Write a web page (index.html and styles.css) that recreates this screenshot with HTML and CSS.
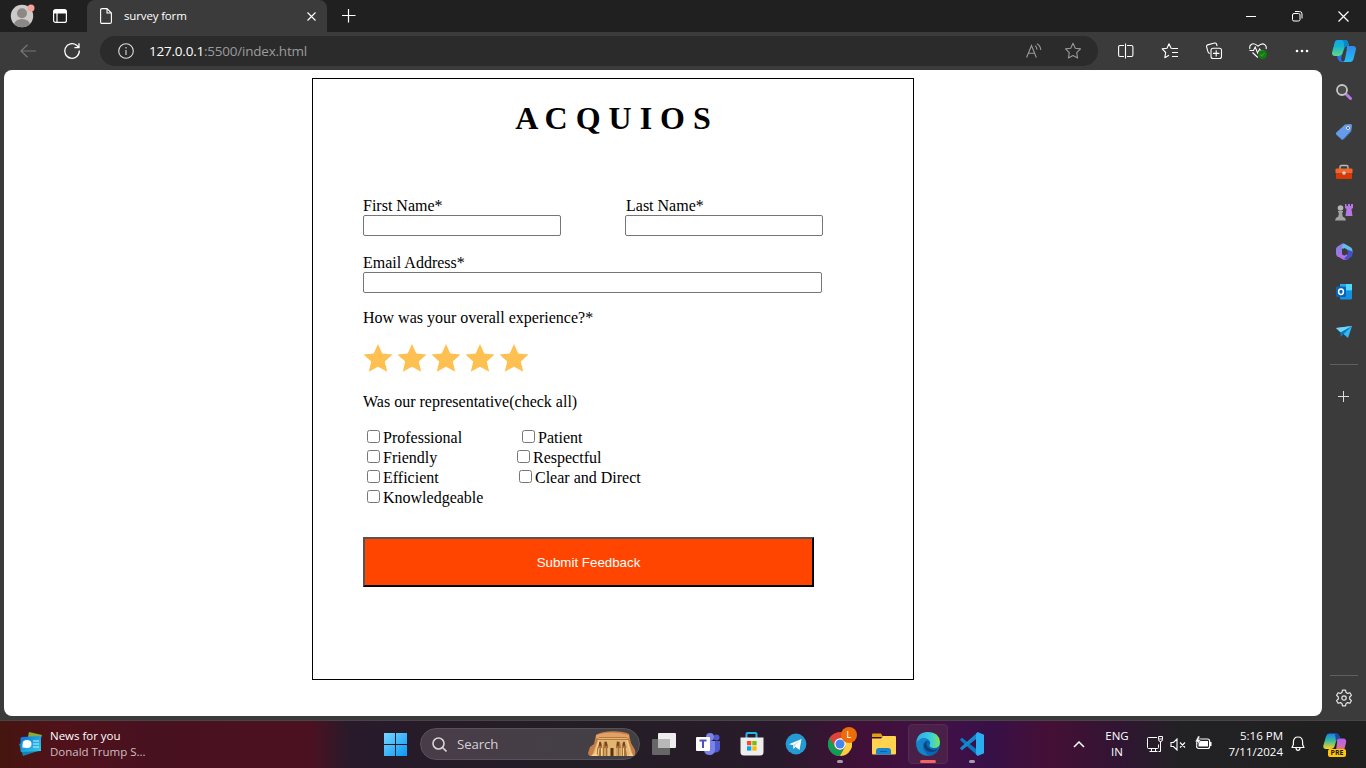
FILE: index.html
```html
<!DOCTYPE html>
<html lang="en">
<head>
<meta charset="utf-8">
<title>survey form</title>
<link rel="stylesheet" href="styles.css">
</head>
<body>
<header class="titlebar">
  <div class="avatar"><svg width="26" height="26" viewBox="0 0 26 26"><defs><clipPath id="av"><circle cx="13" cy="14" r="11.2"/></clipPath></defs><circle cx="13" cy="14" r="11.2" fill="#cdcac7"/><g clip-path="url(#av)" fill="#8b8885"><circle cx="13" cy="11.3" r="5"/><ellipse cx="13" cy="22.5" rx="7.8" ry="5.5"/></g><circle cx="22" cy="6" r="3.5" fill="#f8a09a"/></svg></div>
  <div class="tabmenu"><svg width="14" height="14" viewBox="0 0 14 14"><rect x=".6" y=".6" width="12.8" height="12.8" rx="2" fill="none" stroke="#fff" stroke-width="1.2"/><path d="M1 1h12v3.5H1z" fill="#fff"/><path d="M4 4v9" stroke="#fff" stroke-width="1.2"/></svg></div>
  <div class="tab">
    <svg class="doc" width="12" height="16" viewBox="0 0 12 16" fill="none" stroke="#fff" stroke-width="1.1"><path d="M2 .6h5L11.4 5v9q0 1.400-1.400 1.400H2Q.6 15.400.6 14V2Q.6.6 2 .6zM7 .8V5h4.200"/></svg>
    <span class="tabname">survey form</span>
    <svg width="9" height="9" viewBox="0 0 9 9" stroke="#fff" stroke-width="1.1"><path d="M.5.5l8 8M8.500.5l-8 8"/></svg>
  </div>
  <div class="newtab"><svg width="14" height="14" viewBox="0 0 14 14" stroke="#fff" stroke-width="1.2"><path d="M7 0v14M0 7h14" transform="translate(-.5 -.5)"/></svg></div>
  <div class="winbtns">
    <span><svg width="10" height="10" stroke="#fff"><path d="M0 5.500h10"/></svg></span>
    <span><svg width="11" height="11" fill="none" stroke="#fff"><rect x=".5" y="2.500" width="7.500" height="7.500" rx="1.500"/><path d="M3 .5h4.500q2.500 0 2.500 2.500V7.500"/></svg></span>
    <span><svg width="11" height="11" stroke="#fff" stroke-width="1.2"><path d="M.5.5l10 10M10.500.5l-10 10"/></svg></span>
  </div>
</header>
<nav class="toolbar">
  <span class="nav back"><svg width="16" height="14" fill="none" stroke="#777" stroke-width="1.2"><path d="M16 7H1M7.500.8L1 7l6.500 6.200"/></svg></span>
  <span class="nav"><svg width="18" height="18" viewBox="0 0 18 18" fill="none" stroke="#fff" stroke-width="1.3"><path d="M16.300 8.500A7.300 7.300 0 1 1 13.600 3.300L16 5.500M16 1.200v4.500h-4.600"/></svg></span>
  <div class="address">
    <svg width="16" height="16" viewBox="0 0 16 16" fill="none" stroke="#ddd" stroke-width="1.1"><circle cx="8" cy="8" r="7.300"/><path d="M8 7v5M8 4v1.400"/></svg>
    <span class="url"><b>127.0.0.1</b>:5500/index.html</span>
    <svg class="aloud" width="16" height="16" viewBox="0 0 16 16" fill="none" stroke="#999" stroke-width="1.100"><path d="M.6 14.500L5.500 2.500 10.300 14.500M2.300 10.300h6.400M9 2.600q1.800 1.200 2 4M11 .8q3.300 1.800 3.800 6.200"/></svg>
    <svg width="18" height="18" viewBox="0 0 18 18" fill="none" stroke="#999" stroke-width="1.1" stroke-linejoin="round"><path d="M9 1.300l2.300 4.900 5.200.7-3.800 3.700.9 5.400L9 13.400 4.400 16l.9-5.400L1.500 6.900l5.200-.7z"/></svg>
  </div>
  <div class="tools">
    <span><svg width="16" height="16" viewBox="0 0 16 16" fill="none" stroke="#fff" stroke-width="1.100"><path d="M6 2.500H2Q.6 2.500.6 4v8q0 1.500 1.400 1.500h4M9 2.500h4.500q1.400 0 1.400 1.500v8q0 1.500-1.400 1.500H9M7.500.5v15"/></svg></span>
    <span><svg width="18" height="18" viewBox="0 0 18 18" fill="none" stroke="#fff" stroke-width="1.100" stroke-linejoin="round"><path d="M12 6.500l-1.900-.3L8 1.700 6 6.200l-4.800.7 3.500 3.600-.9 5.200L8 13.200M10.500 6.500H17M11 10.500h6M11 14.500h6"/></svg></span>
    <span><svg width="18" height="18" viewBox="0 0 18 18" fill="none" stroke="#fff" stroke-width="1.100"><rect x="6" y="6.200" width="10.500" height="10.300" rx="2"/><path d="M11.200 8.200v6.400M8 11.400h6.400M4.800 11.500Q3.300 11 3 9.800L1.600 4.800q-.3-1.500 1-1.900l7-1.900q1.400-.3 1.900 1l.6 2"/></svg></span>
    <span><svg width="20" height="18" viewBox="0 0 20 18" fill="none" stroke="#fff" stroke-width="1.100"><path d="M2 7Q1 4.300 3.200 2.500q3-2 6.800 1.700 4-3.700 6.700-1.600Q19 4.400 18 7M1.500 8.500h4L7.200 5l2.400 6 2-4 1 1.500h3M4.500 10.500l5.300 5"/><circle cx="14.500" cy="12.500" r="4.500" fill="#107c10" stroke="none"/><path d="M12.400 12.500l1.500 1.500 2.700-3" stroke="#3f983f"/></svg></span>
    <span><svg width="14" height="4" fill="#fff"><circle cx="2" cy="2" r="1.300"/><circle cx="7" cy="2" r="1.300"/><circle cx="12" cy="2" r="1.300"/></svg></span>
    <span class="copilot"><svg width="24" height="22" viewBox="0 0 24 22"><defs><linearGradient id="ca" x2="0" y2="1"><stop stop-color="#10a6ed"/><stop offset=".4" stop-color="#16b5cf"/><stop offset="1" stop-color="#65d985"/></linearGradient><linearGradient id="cb" x2="0" y2="1"><stop stop-color="#3488eb"/><stop offset="1" stop-color="#20c0f5"/></linearGradient></defs><path d="M5 0h8q3 0 3.500 4l.5 2h-2q-2 0-3 3l-1.500 4.500Q9.500 16 7 16H3Q-1 16 .3 11.500L2.500 3Q3.300 0 5 0z" fill="url(#ca)"/><path d="M5 16h2q2.500 0 3.500-2.500L9 19q.8 3 3.500 3H10q-4 0-5-6z" fill="#2870e8"/><path d="M15 6h6q4 0 2.700 4.500L21.500 19q-.8 3-3.500 3h-8q2.500 0 3-3l1.500-8q.7-5 .5-5z" fill="url(#cb)"/><path d="M10 0h3q3.200 0 4 6h-2q-2 0-3 3 .8-8-2-9z" fill="#0786cc"/></svg></span>
  </div>
</nav>
<div class="middle">
  <main class="page">
    <form class="survey">
      <h1>A C Q U I O S</h1>
      <div class="fields">
        <div class="names">
          <label>First Name*<input type="text"></label>
          <label class="last"><span>Last Name*</span><input type="text"></label>
        </div>
        <label class="email">Email Address*<input type="text"></label>
        <p class="question">How was your overall experience?*</p>
        <div class="stars">
          <svg viewBox="0 0 30 30"><path id="star" d="M15 1l4.300 9.500 10.200 1-7.700 6.900 2.400 10.300L15 23.700l-9.200 5 2.400-10.300L.5 11.500l10.200-1z"/></svg><svg viewBox="0 0 30 30"><use href="#star"/></svg><svg viewBox="0 0 30 30"><use href="#star"/></svg><svg viewBox="0 0 30 30"><use href="#star"/></svg><svg viewBox="0 0 30 30"><use href="#star"/></svg>
        </div>
        <p class="question">Was our representative(check all)</p>
        <div class="checks">
          <div><label class="opt professional"><input type="checkbox">Professional</label><label class="opt"><input type="checkbox">Patient</label></div>
          <div><label class="opt friendly"><input type="checkbox">Friendly</label><label class="opt"><input type="checkbox">Respectful</label></div>
          <div><label class="opt efficient"><input type="checkbox">Efficient</label><label class="opt"><input type="checkbox">Clear and Direct</label></div>
          <div><label class="opt"><input type="checkbox">Knowledgeable</label></div>
        </div>
        <button class="submit" type="button">Submit Feedback</button>
      </div>
    </form>
  </main>
  <aside class="sidebar">
    <span><svg width="18" height="18"><path d="M11.500 11.500l4 4" stroke="#b47be8" stroke-width="3" stroke-linecap="round"/><circle cx="7" cy="7" r="5" fill="#4a4a4a" stroke="#c5c5c5" stroke-width="1.800"/></svg></span>
    <span><svg width="18" height="18"><path d="M10 1.500l5.500-.5q1.500 0 1.500 1.500l-.8 5.500-7.700 8q-1 1-2 0L1.300 11.500q-1-1 0-2z" fill="#659bea"/><path d="M1.300 11.500L6.500 16q1 1 2 0l7.700-8" fill="none" stroke="#4f83d8"/><circle cx="13" cy="5" r="1.500" fill="#345" stroke="#e8f2ff"/></svg></span>
    <span><svg width="18" height="16"><path d="M5 5V3q0-1.500 1.500-1.500h5Q13 1.500 13 3v2" fill="none" stroke="#bbb" stroke-width="1.400"/><rect x=".5" y="4.500" width="17" height="5" rx="1" fill="#f5652c"/><path d="M1 9.500h16V14q0 1-1 1H2q-1 0-1-1z" fill="#d83b01"/><circle cx="9" cy="9" r="1.800" fill="#d1d1d1"/></svg></span>
    <span><svg width="18" height="18"><path d="M10 1h1.500v2H13V1h2v2h1V1h2v4l-1.500 1 1 7h-7l1-7L10 5z" fill="#b678e3"/><circle cx="5.500" cy="5" r="2.800" fill="#b5b5b5"/><path d="M3 8h5v1.500H7l.7 4q3 1 3.300 4H0q.3-3 3.300-4l.7-4H3z" fill="#a2a2a2"/></svg></span>
    <span><svg width="18" height="18"><path d="M6 1.500Q8 0 10 1l6 3.500Q17.500 5.500 17.500 8v2L12.500 8 6 5z" fill="#61bdf0"/><path d="M9 .7Q7 2 7 4v7l-4 3q-2-1-2-4V6q0-1.500 1.500-2.500l4-2.500Q8 .3 9 .7z" fill="#8f7de0"/><path d="M1 9.500q0 3 2 4l5 3q2 1 4 0l3-2-3.500-3.500-2.500 1.500L5.500 10 2 13z" fill="#b56fe8"/><path d="M12.500 6.500l5 2V11q0 2-2 3.500l-3.500 2q-2 .5-3-.5l3.500-4z" fill="#4451c8"/><path d="M7 6.500l2.500-1.400 3 1.700v3.900l-3 1.800L7 11z" fill="#3b3b3b"/></svg></span>
    <span><svg width="18" height="18"><rect x="5" y="1" width="12" height="12" fill="#28a8ea"/><path d="M11 1h6v6h-6z" fill="#50d9ff"/><path d="M5 8l12 0v7q0 1.500-1.500 1.500H6q-1 0-1-1z" fill="#1490df"/><rect x="1" y="3.500" width="10" height="10.500" rx="1" fill="#0864b9"/><ellipse cx="6" cy="8.700" rx="2.400" ry="2.700" fill="none" stroke="#fff" stroke-width="1.500"/></svg></span>
    <span><svg width="18" height="14"><path d="M1 3l16-2-4 12-4.500-4z" fill="#34b7ef"/><path d="M17 1L5.500 7.500 1 3z" fill="#72d4fa"/><path d="M17 1L5.500 7.500V12l3-3z" fill="#0879c4"/></svg></span>
    <i class="line"></i>
    <span class="add"><svg width="11" height="11" stroke="#ddd"><path d="M5.500 0v11M0 5.500h11"/></svg></span>
    <i class="line bottom"></i>
    <span class="gear"><svg width="18" height="18" viewBox="0 0 18 18" fill="none" stroke="#e5e5e5" stroke-width="1.200" stroke-linejoin="round"><path d="M7.500 1.200h3l.6 2.300 1.500.9 2.300-.7 1.500 2.600-1.700 1.700v2l1.700 1.700-1.500 2.600-2.300-.7-1.500.9-.6 2.300h-3l-.6-2.300-1.500-.9-2.300.7-1.500-2.600L3.300 10V8L1.600 6.300l1.500-2.600 2.300.7 1.500-.9z"/><circle cx="9" cy="9" r="2.200"/></svg></span>
  </aside>
</div>
<footer class="taskbar">
  <div class="widgets"><svg width="24" height="24" viewBox="0 0 24 24"><path d="M10 0l13 3-3 10-12-3z" fill="#87ac3a"/><path d="M0 12l14-5 5 12-15 5z" fill="#1580b1"/><defs><linearGradient id="ng" x2="1" y2="1"><stop stop-color="#0872dc"/><stop offset="1" stop-color="#35d0e8"/></linearGradient></defs><path d="M3 5l19-1v15L3 20q-1.500 0-1.500-1.500v-12Q1.500 5 3 5z" fill="url(#ng)"/><path d="M3.500 15.500V12q0-4 4.500-4t4.500 4-4.500 4z" fill="#fff"/><path d="M14 9h6M14 12h6M14 15h6" stroke="#bff4ff" stroke-width="1.200"/></svg>
    <div class="news"><div>News for you</div><div class="sub">Donald Trump S...</div></div></div>
  <div class="apps">
    <span class="start"><svg width="23" height="23"><defs><linearGradient id="wg" gradientUnits="userSpaceOnUse" x1="0" y1="0" x2="23" y2="23"><stop stop-color="#75d7ff"/><stop offset="1" stop-color="#0a97f5"/></linearGradient></defs><path d="M0 0h11v11H0zM12 0h11v11H12zM0 12h11v11H0zM12 12h11v11H12z" fill="url(#wg)"/></svg></span>
    <div class="search"><svg width="15" height="15" fill="none" stroke="#d7d5d7" stroke-width="1.600"><circle cx="6.500" cy="6.500" r="5.500"/><path d="M10.500 10.500l4 4"/></svg><span>Search</span>
      <svg class="temple" width="48" height="26" viewBox="0 0 48 26"><path d="M0 22l2-6 4-3L8 4q4-3 12-3.500Q34-.5 41 3l2 9 4 7q1 4-1 6H2q-2-1-2-3z" fill="#c57e47"/><path d="M8 4q14-5 33 0v3H8z" fill="#e2a166"/><path d="M4 25L11 6h28l6 19z" fill="#e3b570"/><path d="M11 6.500h28M10 8.500h30" stroke="#b27a3c"/><path d="M11 9l-4 16M39 9l4 16" stroke="#f5d893"/><path d="M9 25v-7l2-5 1-3 2 3v12zM15 25v-8l1-6 2-1 2 4v11zM28 25V14l1-4 3 1 1 6v8zM34 25V13l2-3 2 5 2 10z" fill="#a8713b"/><path d="M12 11v4M18 11v4M30 11v4M36 11v4" stroke="#60371c" stroke-width="1.500"/><path d="M11 17l-1 8M13.500 17v8M17 17v8M20 17v8M29 17v8M32 17v8M35.500 17v8M38.500 17l1 8" stroke="#f6d28a"/><path d="M22.500 25v-8h3v8z" fill="#573315"/><path d="M3 25q5-5 7 0M40 25q4-5 5 0" fill="#f6d092"/></svg></div>
    <span class="app"><svg width="24" height="24"><rect x="6" y="1" width="18" height="15" rx="1" fill="#ededed"/><rect y="7" width="18" height="16" rx="1" fill="#666"/><path d="M6 7h12v9H6z" fill="#b8b8b8"/></svg></span>
    <span class="app"><svg width="24" height="24" viewBox="0 0 24 24"><circle cx="20.500" cy="5.500" r="3" fill="#5059c9"/><circle cx="14" cy="5" r="4" fill="#7b83eb"/><path d="M17 9h7v7q0 4-4 4.500h-4z" fill="#5059c9"/><path d="M8 9h11v8q0 6-5.500 6T8 17z" fill="#7b83eb"/><rect y="5" width="14" height="14" rx="1" fill="#fff"/><path d="M3.500 8.500h7M7 8.500V16" stroke="#4b53bc" stroke-width="2"/></svg></span>
    <span class="app"><svg width="24" height="24"><path d="M6.500 6V2q0-1 1-1h8q1 0 1 1v4" fill="none" stroke="#25b7e8" stroke-width="2"/><path d="M.5 5.500h23V20q0 3.500-3.500 3.500H4Q.5 23.500.5 20z" fill="#eee"/><path d="M7 9h4.300v4.300H7z" fill="#f25022"/><path d="M12.300 9h4.300v4.300h-4.300z" fill="#7fba00"/><path d="M7 14.300h4.300v4.300H7z" fill="#00a4ef"/><path d="M12.300 14.300h4.300v4.300h-4.300z" fill="#ffb900"/></svg></span>
    <span class="app"><svg width="22" height="22"><circle cx="11" cy="11" r="10.400" fill="#249bd3"/><path d="M4 11.200L16.500 6l-2 11-4-3-2 2-.6-4z" fill="#fff"/><path d="M8 12l6-3.800-4.700 5-.3 2.300z" fill="#b2d9ed"/></svg></span>
    <span class="app"><svg width="24" height="24" viewBox="0 0 24 24"><circle cx="12" cy="12" r="12" fill="#db4437"/><path d="M1.600 6A12 12 0 0 0 12 24l5-9-5 3q-5 0-6-5z" fill="#0f9d58"/><path d="M12 24a12 12 0 0 0 10.500-18H12l5.500 8z" fill="#ffcd40"/><circle cx="12" cy="12" r="5.700" fill="#fff"/><circle cx="12" cy="12" r="4.500" fill="#4285f4"/></svg><b class="badge">L</b><i class="run"></i></span>
    <span class="app"><svg width="24" height="22"><path d="M0 4V1.500Q0 .5 1 .5h8l2 3.500z" fill="#dfa010"/><path d="M0 5.500h9L11 3h12q1 0 1 1v16.500q0 1-1 1H1q-1 0-1-1z" fill="#ffd34f"/><path d="M4 21.500V18q0-3 3-3h9q3 0 3 3v3.500z" fill="#1686d3"/><path d="M8 18.500h7" stroke="#0760a5"/></svg></span>
    <span class="app active"><svg width="24" height="24" viewBox="0 0 24 24"><defs><linearGradient id="eg"><stop stop-color="#32a9e6"/><stop offset=".6" stop-color="#39cddd"/><stop offset="1" stop-color="#77e659"/></linearGradient></defs><circle cx="12" cy="12" r="12" fill="#0968b5"/><path d="M.2 11Q1 0 12 0q11 0 12 10 0 6-6 6-4.500 0-4.500-3 2-3-1.500-5.500Q6 4 .2 11z" fill="url(#eg)"/><path d="M.2 11Q7 3 12 8q-5 1-5 6 0 6 6 9.500Q1 24 .2 11z" fill="#1685c7"/><path d="M12 8.500q-3.500 3 0 7 4 4 10 1.500l-2 2Q11 22 8 15q-1-4 4-6.500z" fill="#153e79"/></svg><i class="run"></i></span>
    <span class="app"><svg width="24" height="24" viewBox="0 0 24 24"><path d="M0 7.500l2-1.700L18 18.500V24L1 9z" fill="#087cc1"/><path d="M0 16.500l2 1.700L18 5.500V0L1 15z" fill="#1689cc"/><path d="M17.500 0L24 2.800v18.400L17.500 24 16 22V2z" fill="#2badf2"/></svg><i class="run"></i></span>
  </div>
  <div class="tray">
    <span class="chev"><svg width="12" height="7" fill="none" stroke="#fff" stroke-width="1.500"><path d="M1 6l5-5 5 5"/></svg></span>
    <div class="lang">ENG<br>IN</div>
    <span class="net"><svg width="17" height="17" fill="none" stroke="#fff"><path d="M11 1.500H2.500q-1 0-1 1v9q0 1 1 1h9q1 0 1-1V8.500M5.500 12.500v3M9.500 12.500v3M3.500 15.500h8M12.500.5h4v3q0 2-2 2t-2-2zM12.500 3h4M14.500 5.500v10h-2"/></svg></span>
    <span class="vol"><svg width="16" height="13" fill="none" stroke="#fff" stroke-width="1.100"><path d="M1 4.500h2.500L7 1v11L3.500 8.500H1zM10 4.500l5 5M15 4.500l-5 5"/></svg></span>
    <span class="bat"><svg width="17" height="14"><rect x="1.600" y="3" width="13" height="9.500" rx="2" fill="none" stroke="#fff" stroke-width="1.200"/><path d="M3.500 5h9.500v5.500H3.500zM15 6h1.500v4H15z" fill="#fff"/><path d="M3 0L0 6h2.500L2 9.500 6 3.700H3.700L5 0z" fill="#fff" stroke="#222" stroke-width=".5"/></svg></span>
    <div class="clock">5:16 PM<br>7/11/2024</div>
    <span class="bell"><svg width="14" height="16" fill="none" stroke="#fff" stroke-width="1.200" stroke-linejoin="round"><path d="M1 11.500l1.400-3V6q0-5 4.600-5t4.600 5v2.500l1.400 3zM5 12q.2 2.300 2 2.300T9 12"/></svg></span>
    <span class="pre"><svg width="24" height="23" viewBox="0 0 24 22"><defs><linearGradient id="pa" x2="0" y2="1"><stop stop-color="#187ee8"/><stop offset=".45" stop-color="#35b9a1"/><stop offset="1" stop-color="#ffd21c"/></linearGradient><linearGradient id="pb" x2="0" y2="1"><stop stop-color="#ac64ed"/><stop offset="1" stop-color="#f37577"/></linearGradient></defs><path d="M6 0h7q3 0 4 5-3 0-4 3l-1.500 5q-1 2.500-4 2.500H3Q-.5 15.500.5 11.500L3 3q1-3 3-3z" fill="url(#pa)"/><path d="M15 5h5q4 0 3 4.500L21 17q-1 3-4 3h-7q2 0 3-3l1-8q0-4 1-4z" fill="url(#pb)"/><path d="M13 0q3 0 4 5-3 0-4 3l-1-7z" fill="#2744a5"/></svg><b>PRE</b></span>
  </div>
</footer>
</body>
</html>
```
FILE: styles.css
```css
* { box-sizing: border-box; }
body { margin: 0; width: 1366px; height: 768px; overflow: hidden; display: flex; flex-direction: column; background: #3b3b3b; font-family: "Open Sans", "Noto Sans", sans-serif; color: #fff; }
svg { display: block; flex: none; }
.titlebar { height: 32px; flex: none; display: flex; background: #202020; }
.titlebar > div { display: flex; align-items: center; }
.avatar { padding: 0 0 2px 9px; width: 53px; }
.tabmenu { width: 34px; }
.tab { width: 240px; background: #3b3b3b; border-radius: 8px 8px 0 0; padding: 0 11px 0 13px; }
.tabname { flex: 1; font-size: 11.5px; padding-left: 12px; line-height: 16px; letter-spacing: -.15px; }
.newtab { width: 44px; padding-left: 15px; }
.winbtns { margin-left: auto; }
.winbtns span { width: 46px; display: flex; justify-content: center; }
.toolbar { height: 38px; flex: none; display: flex; align-items: center; }
.nav { width: 44px; display: flex; justify-content: center; }
.back { margin-left: 6px; }
.address { margin-left: 6px; width: 998px; height: 30px; border-radius: 15px; background: #2b2b2b; display: flex; align-items: center; padding: 0 16px 0 18px; }
.url { flex: 1; font-size: 13.5px; padding-left: 15px; line-height: 20px; color: #9b9b9b; letter-spacing: -.22px; }
.url b { font-weight: 400; color: #fff; }
.aloud { margin-right: 22px; }
.tools { display: flex; align-items: center; margin-left: 6px; }
.tools span { width: 44px; display: flex; justify-content: center; }
.tools .copilot { width: 40px; }
.middle { height: 650px; flex: none; display: flex; padding-left: 4px; }
.page { width: 1318px; height: 646px; background: #fff; border-radius: 8px; padding: 8px 0 0 308px; color: #000; font: 16px/18px "Liberation Serif", serif; }
.survey { width: 602px; height: 602px; border: 1px solid #000; padding-top: 21px; }
h1 { margin: 0; font-size: 32px; line-height: 37px; text-align: center; }
.fields { padding: 60px 0 0 50px; }
.fields label { display: block; }
.names { display: flex; gap: 64px; }
input[type=text] { display: block; margin: 0; width: 198px; height: 21px; border: 1px solid #767676; border-radius: 2px; background: #fff; }
.last span { padding-left: 1px; }
.email { margin-top: 18px; }
.email input[type=text] { width: 459px; }
.question { margin: 16px 0 0; }
.stars { display: flex; gap: 4px; margin-top: 16px; height: 34px; }
.stars svg { width: 30px; height: 30px; fill: #fec151; }
.checks { margin-top: 17px; line-height: 20px; }
.checks > div { display: flex; height: 20px; }
.fields .opt { display: flex; align-items: center; height: 20px; }
.opt input { width: 13px; height: 13px; margin: 0 3px 3px 4px; }
.professional { width: 155px; }
.friendly { width: 150px; }
.efficient { width: 152px; }
.submit { display: block; margin-top: 29px; width: 451px; height: 50px; background: orangered; color: #fff; border: 2px outset #000; font: 13.333px "Liberation Sans", sans-serif; }
.sidebar { width: 44px; display: flex; flex-direction: column; align-items: center; padding-top: 2px; }
.sidebar span { height: 40px; display: flex; align-items: center; }
.line { width: 28px; height: 1px; background: #606060; margin-top: 12px; }
.sidebar .add { margin-top: 12px; padding: 0 1px 2px 0; }
.line.bottom { margin-top: auto; }
.sidebar .gear { height: 44px; }
.taskbar { height: 48px; flex: none; display: flex; align-items: center; box-shadow: inset 0 1px #4b4347; background: linear-gradient(90deg, #45150f 0, #50121a 60px, #481120 150px, #4c1120 310px, #281a2b 350px, #231e25 590px, #291a2b 780px, #401038 860px, #401048 950px, #371048 990px, #450f35 1050px, #301533 1120px, #222124 1180px, #202020 1366px); }
.widgets { width: 375px; display: flex; align-items: center; padding-left: 19px; }
.news { font-size: 11.5px; line-height: 16px; padding-left: 7px; letter-spacing: -.02px; }
.sub { color: #cfbfc2; }
.apps { display: flex; align-items: center; }
.start { width: 45px; padding-left: 9px; }
.search { width: 220px; height: 32px; border-radius: 16px; background: linear-gradient(90deg, #493c49, #414044); border: 1px solid #59515a; display: flex; align-items: center; padding: 0 3px 0 11px; font-size: 13.2px; color: #d5d2d6; }
.search span { flex: 1; padding-left: 10px; letter-spacing: -.1px; }
.app { width: 40px; height: 40px; margin-left: 4px; position: relative; display: flex; align-items: center; justify-content: center; }
.app.active { background: #4b2048; border: 1px solid #552b52; border-radius: 4px; }
.run { position: absolute; bottom: 1px; left: 17px; width: 6px; height: 3px; border-radius: 2px; background: #a99aa9; }
.active .run { left: 11px; width: 16px; bottom: 0; background: #f56260; }
.badge { position: absolute; left: 21px; top: 3px; width: 16px; height: 16px; border-radius: 8px; background: #ec6c08; font: 9px/16px Roboto, sans-serif; text-align: center; }
.tray { margin-left: auto; display: flex; align-items: center; font-size: 11.5px; line-height: 16px; }
.lang { width: 40px; margin-left: 12px; text-align: center; }
.net { margin-left: 9px; }
.vol { margin-left: 7px; }
.bat { margin-left: 9px; padding-bottom: 2px; }
.clock { width: 71px; text-align: right; }
.bell { margin-left: 8px; }
.pre { margin: 0 19px 0 18px; position: relative; }
.pre b { position: absolute; left: 5px; bottom: -1px; width: 18px; height: 8px; border-radius: 2px; background: #ffc60b; color: #241b08; font: bold 7px/8px "Open Sans", sans-serif; text-align: center; }
```
